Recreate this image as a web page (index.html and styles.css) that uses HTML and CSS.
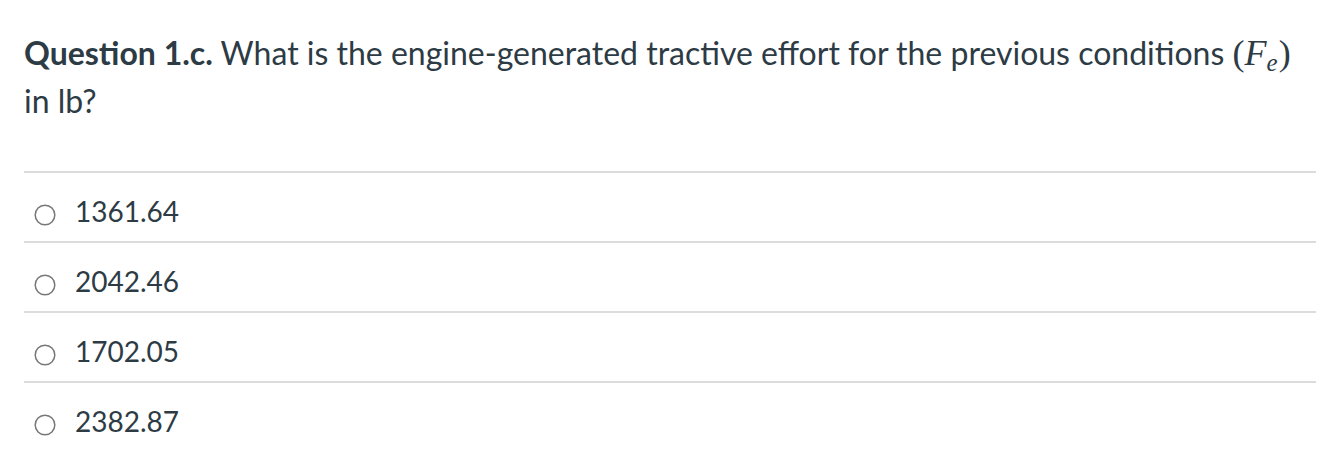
FILE: index.html
```html
<!DOCTYPE html>
<html>
<head>
<meta charset="utf-8">
<link rel="stylesheet" href="styles.css">
</head>
<body>
<div class="quiz">
  <div class="question"><strong>Question 1.c.</strong> What is the engine-generated tractive effort for the previous conditions <span class="math">(<i class="mvar">F</i><sub class="msub">e</sub>)</span> in lb?</div>
  <div class="answers">
    <label class="answer"><span class="radio"><svg width="22" height="22" viewBox="0 0 22 22"><circle cx="11" cy="11" r="9.8" fill="#fff" stroke="#777" stroke-width="1.5"/></svg></span><span class="text">1361.64</span></label>
    <label class="answer"><span class="radio"><svg width="22" height="22" viewBox="0 0 22 22"><circle cx="11" cy="11" r="9.8" fill="#fff" stroke="#777" stroke-width="1.5"/></svg></span><span class="text">2042.46</span></label>
    <label class="answer"><span class="radio"><svg width="22" height="22" viewBox="0 0 22 22"><circle cx="11" cy="11" r="9.8" fill="#fff" stroke="#777" stroke-width="1.5"/></svg></span><span class="text">1702.05</span></label>
    <label class="answer"><span class="radio"><svg width="22" height="22" viewBox="0 0 22 22"><circle cx="11" cy="11" r="9.8" fill="#fff" stroke="#777" stroke-width="1.5"/></svg></span><span class="text">2382.87</span></label>
  </div>
</div>
</body>
</html>
```
FILE: styles.css
```css
html, body {
  margin: 0;
  padding: 0;
  background: #fff;
}
body {
  font-family: Lato, "Noto Sans", sans-serif;
  color: #2d3b45;
}
.quiz {
  padding: 29px 2px 0 24px;
}
.question {
  font-size: 32px;
  line-height: 48px;
  padding-right: 12px;
}
.question strong {
  font-weight: 700;
}
.math {
  font-family: "Liberation Serif", "DejaVu Serif", serif;
  font-size: 36px;
  line-height: 0;
  white-space: nowrap;
}
.mvar {
  font-style: italic;
}
.msub {
  font-style: italic;
  font-size: 25px;
  vertical-align: -6px;
  line-height: 0;
  margin-right: 1px;
}
.answers {
  margin-top: 46px;
}
.answer {
  display: flex;
  align-items: flex-start;
  border-top: 2px solid #dcdcdc;
  padding: 22px 0 14px 10px;
  font-size: 28px;
  line-height: 32px;
}
.radio {
  display: flex;
  width: 22px;
  height: 22px;
  margin-top: 9px;
  margin-right: 19px;
}
.text {
  display: block;
}
```
